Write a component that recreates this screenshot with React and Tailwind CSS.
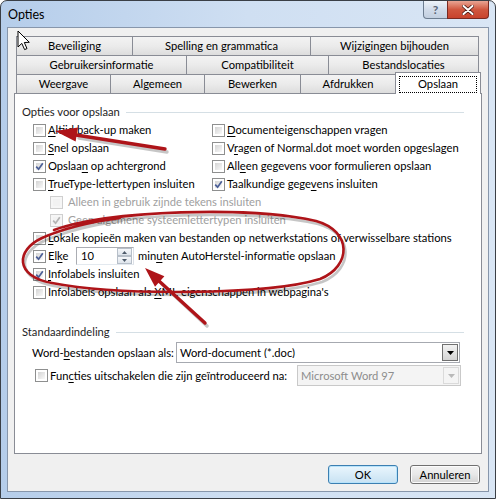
import React from "react";

const font = "font-['Lato',sans-serif]";

function Check({ checked, disabled }) {
  return (
    <span
      className={`relative flex h-[13px] w-[13px] shrink-0 items-center justify-center border ${
        disabled ? "border-[#cfcfcf] bg-[#f6f6f6]" : "border-[#8e8f8f] bg-white"
      }`}
    >
      <span
        className={`absolute inset-[2px] ${
          disabled ? "bg-[#f2f2f2]" : "bg-gradient-to-br from-[#d4d4d4] to-[#f9f9f9]"
        }`}
      />
      {checked && (
        <svg viewBox="0 0 9 9" className="relative h-[9px] w-[9px]">
          <path
            d="M1.2 4.6 L3.6 7.2 L7.8 1.2"
            fill="none"
            stroke={disabled ? "#b4b4b4" : "#4b5f97"}
            strokeWidth="1.7"
          />
        </svg>
      )}
    </span>
  );
}

function U({ children }) {
  return <span className="underline underline-offset-[2px]">{children}</span>;
}

function Row({ checked, disabled, indent, children }) {
  return (
    <div className={`flex h-[18px] items-center gap-[2px] ${indent ? "pl-[28px]" : "pl-[11px]"}`}>
      <Check checked={checked} disabled={disabled} />
      <span className={`${indent ? "ml-[3px]" : ""} whitespace-nowrap ${disabled ? "text-[#a0a0a0]" : "text-black"}`}>
        {children}
      </span>
    </div>
  );
}

function Group({ children }) {
  return (
    <div className="flex h-[18px] items-center">
      <span className="whitespace-nowrap text-[#1e1e1e]">{children}</span>
      <span className="ml-[6px] h-px flex-1 bg-[#d5dfe5]" />
    </div>
  );
}

function Tab({ w, children }) {
  return (
    <div
      style={{ width: w }}
      className="-ml-px flex h-[19px] shrink-0 items-center justify-center border border-b-0 border-[#898c95] bg-gradient-to-b from-[#f3f3f3] via-[#ebebeb] to-[#dddddd] first:ml-0"
    >
      {children}
    </div>
  );
}

function Combo({ w, disabled, children }) {
  return (
    <div
      style={{ width: w }}
      className={`flex h-[21px] shrink-0 items-center border ${
        disabled ? "border-[#c9c9c9] bg-[#f4f4f4] text-[#8d8d8d]" : "border-[#a6a9b0] bg-white text-black"
      }`}
    >
      <span className="flex-1 truncate pl-[3px]">{children}</span>
      <span
        className={`mr-px flex h-[17px] w-[16px] items-center justify-center border ${
          disabled ? "border-[#dadada] bg-[#f4f4f4]" : "border-[#707070] bg-gradient-to-b from-[#f2f2f2] to-[#d4d4d4]"
        }`}
      >
        <svg viewBox="0 0 7 4" className="h-[4px] w-[7px]">
          <path d="M0 0 H7 L3.5 4 Z" fill={disabled ? "#b9b9b9" : "#000"} />
        </svg>
      </span>
    </div>
  );
}

function Spin() {
  return (
    <div className="ml-[6px] flex h-[18px] w-[58px] items-center border border-[#abadb3] border-b-[#e3e9ef] border-r-[#dbdfe6] bg-white">
      <span className="flex-1 pl-[4px]">10</span>
      <div className="mr-px flex flex-col">
        {[0, 1].map((i) => (
          <span
            key={i}
            className="flex h-[8px] w-[15px] items-center justify-center border border-[#b7bfc9] bg-gradient-to-b from-[#f5f7fa] to-[#dfe5ec]"
          >
            <svg viewBox="0 0 5 3" className="h-[3px] w-[5px]">
              <path d={i === 0 ? "M0 3 H5 L2.5 0 Z" : "M0 0 H5 L2.5 3 Z"} fill="#4d5a6a" />
            </svg>
          </span>
        ))}
      </div>
    </div>
  );
}

function Btn({ focus, children }) {
  return (
    <div
      className={`flex h-[19px] w-[70px] items-center justify-center rounded-[3px] border ${
        focus
          ? "border-[#3c7fb1] bg-gradient-to-b from-[#eaf6fd] to-[#c8e2f3] shadow-[inset_0_0_0_1px_#b7e3fb]"
          : "border-[#707070] bg-gradient-to-b from-[#f2f2f2] via-[#e8e8e8] to-[#d2d2d2] shadow-[inset_0_0_0_1px_#fcfcfc]"
      }`}
    >
      {children}
    </div>
  );
}

const loop =
  "M54 230 C110 210 250 206 316 221 C352 231 352 266 320 279 C268 295 120 296 52 283 C14 276 16 250 42 238 C62 229 90 222 120 218";

function Marks() {
  return (
    <svg className="pointer-events-none absolute inset-0" width="496" height="499" viewBox="0 0 496 499">
      <g opacity="0.22" transform="translate(2 3)" stroke="#000" fill="none" strokeLinecap="round">
        <path d="M165 149 L77 135" strokeWidth="3.4" />
        <path d="M205 323 L160 281" strokeWidth="3.4" />
        <path d={loop} strokeWidth="2.6" />
      </g>
      <g fill="#ae1419" stroke="#ae1419">
        <path d="M165 149 L76 135" strokeWidth="3.4" strokeLinecap="round" fill="none" />
        <path d="M55 131 L78 127.6 L75.6 141.4 Z" stroke="none" />
        <path d="M205 323 L159 281" strokeWidth="3.4" strokeLinecap="round" fill="none" />
        <path d="M145 268 L164.4 276.3 L155 286.7 Z" stroke="none" />
        <path d={loop} fill="none" strokeWidth="2.6" strokeLinecap="round" />
      </g>
      <path
        d="M18 31 L18 47 L21.8 43.4 L24.6 49.6 L27 48.6 L24.3 42.5 L29.3 42.3 Z"
        fill="#fff"
        stroke="#000"
        strokeWidth="1"
        strokeLinejoin="round"
      />
    </svg>
  );
}

export default function App() {
  return (
    <div className={`${font} relative h-[499px] w-[496px] overflow-hidden bg-white text-[11.2px] leading-none text-black`}>
      <div className="flex h-full w-full flex-col rounded-t-[7px] border border-[#3a3f46] bg-gradient-to-r from-[#b5cdea] via-[#cfdff2] to-[#d9e6f5]">
        {/* title bar */}
        <div className="flex h-[26px] shrink-0 items-start">
          <span className="mt-[8px] pl-[7px] text-[12.5px] text-black">Opties</span>
          <div className="ml-auto mr-[6px] flex">
            <div className="flex h-[18px] w-[25px] items-center justify-center rounded-bl-[4px] border border-t-0 border-[#6d7d90] bg-gradient-to-b from-[#eef3f9] via-[#d2dcea] to-[#c2cfe0] text-[12px] font-bold text-[#5a6577]">
              ?
            </div>
            <div className="-ml-px flex h-[18px] w-[42px] items-center justify-center rounded-br-[4px] border border-t-0 border-[#7a2a21] bg-gradient-to-b from-[#e8a493] via-[#d0573f] to-[#c8432d]">
              <svg viewBox="0 0 12 10" className="h-[10px] w-[12px]">
                <path d="M1.5 1 L10.5 9 M10.5 1 L1.5 9" stroke="#4a1a14" strokeWidth="3.6" strokeLinecap="round" />
                <path d="M1.5 1 L10.5 9 M10.5 1 L1.5 9" stroke="#fff" strokeWidth="2" strokeLinecap="round" />
              </svg>
            </div>
          </div>
        </div>

        {/* client */}
        <div className="mx-[6px] mb-[6px] flex flex-1 flex-col border border-[#8796ab] bg-[#f0f0f0] px-[6px] pt-[8px]">
          {/* tabs */}
          <div className="ml-[2px] flex flex-col">
            <div className="flex">
              <Tab w={117}>Beveiliging</Tab>
              <Tab w={179}>Spelling en grammatica</Tab>
              <Tab w={169}>Wijzigingen bijhouden</Tab>
            </div>
            <div className="flex">
              <Tab w={171}>Gebruikersinformatie</Tab>
              <Tab w={143}>Compatibiliteit</Tab>
              <Tab w={151}>Bestandslocaties</Tab>
            </div>
            <div className="flex h-[19px] items-end">
              <Tab w={95}>Weergave</Tab>
              <Tab w={95}>Algemeen</Tab>
              <Tab w={97}>Bewerken</Tab>
              <Tab w={96}>Afdrukken</Tab>
              <div className="relative z-10 -mb-px -ml-px flex h-[22px] w-[86px] shrink-0 items-center justify-center border border-b-0 border-[#898c95] bg-white pt-[1px]">
                <span className="flex h-[17px] w-[78px] items-center justify-center border border-dotted border-black">
                  Opslaan
                </span>
              </div>
            </div>
          </div>

          {/* panel */}
          <div className="flex h-[361px] flex-col border border-[#898c95] bg-white pl-[7px] pr-[17px] pt-[9px]">
            <Group>Opties voor opslaan</Group>
            <div className="grid grid-cols-[190px_1fr]">
              <Row><U>A</U>ltijd back-up maken</Row>
              <div className="-ml-[11px]">
                <Row><U>D</U>ocumenteigenschappen vragen</Row>
              </div>
              <Row><U>S</U>nel opslaan</Row>
              <div className="-ml-[11px]">
                <Row>V<U>r</U>agen of Normal.dot moet worden opgeslagen</Row>
              </div>
              <Row checked>Opslaa<U>n</U> op achtergrond</Row>
              <div className="-ml-[11px]">
                <Row>All<U>e</U>en gegevens voor formulieren opslaan</Row>
              </div>
              <Row><U>T</U>rueType-lettertypen insluiten</Row>
              <div className="-ml-[11px]">
                <Row checked>Taalkundige gege<U>v</U>ens insluiten</Row>
              </div>
            </div>
            <Row indent disabled>Alleen in gebruik zijnde tekens insluiten</Row>
            <Row indent disabled checked>Geen algemene systeemlettertypen insluiten</Row>
            <Row><U>L</U>okale kopieën maken van bestanden op netwerkstations of verwisselbare stations</Row>
            <div className="flex h-[18px] items-center pl-[11px]">
              <Check checked />
              <span className="ml-[2px] w-[22px]">El<U>k</U>e</span>
              <Spin />
              <span className="ml-[4px] whitespace-nowrap">
                min<U>u</U>ten AutoHerstel-informatie opslaan
              </span>
            </div>
            <Row checked><U>I</U>nfolabels insluiten</Row>
            <Row>Infolabels opslaan als <U>X</U>ML-eigenschappen in webpagina's</Row>

            <div className="mt-[22px]">
              <Group>Standaardindeling</Group>
            </div>
            <div className="mt-px flex items-center pl-[10px]">
              <span className="w-[144px] shrink-0 whitespace-nowrap">
                Word-<U>b</U>estanden opslaan als:
              </span>
              <Combo w={284}>Word-document (*.doc)</Combo>
            </div>
            <div className="mt-[2px] flex items-center pl-[13px]">
              <Check />
              <span className="ml-[2px] whitespace-nowrap">
                Fun<U>c</U>ties uitschakelen die zijn geïntroduceerd na:
              </span>
              <div className="ml-auto mr-[3px]">
                <Combo w={164} disabled>Microsoft Word 97</Combo>
              </div>
            </div>
          </div>

          {/* buttons */}
          <div className="mt-[11px] flex justify-end gap-[12px] pr-[2px]">
            <Btn focus>OK</Btn>
            <Btn>Annuleren</Btn>
          </div>
        </div>
      </div>
      <Marks />
    </div>
  );
}
